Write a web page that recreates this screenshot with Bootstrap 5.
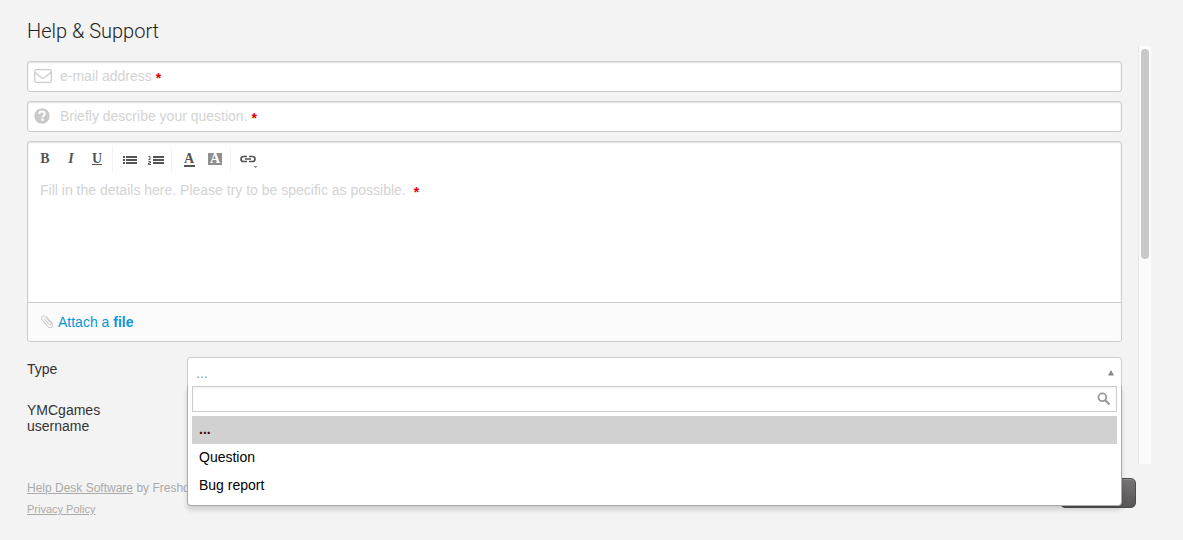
<!DOCTYPE html>
<html lang="en">
<head>
<meta charset="utf-8">
<meta name="viewport" content="width=device-width, initial-scale=1">
<title>Help &amp; Support</title>
<link href="https://cdn.jsdelivr.net/npm/bootstrap@5.3.0/dist/css/bootstrap.min.css" rel="stylesheet">
<style>
body { background: #f3f3f3; color: #333; font: 14px/16px "Liberation Sans", Arial, sans-serif; }
.page { padding: 16px 32px 0 27px; }
h1 { font: 300 20px/30px Roboto, "Liberation Sans", sans-serif; color: #222; }
.form-area { padding: 15px 16px 30px 0; min-width: 0; }
.field-box { background: #fff; border: 1px solid #ccc; border-radius: 3px; box-shadow: inset 0 1px 2px rgba(0,0,0,.12); }
.field-row { margin-bottom: 9px; }
.field-row input { height: 29px; padding: 0 8px 0 32px; }
.field-row svg { position: absolute; left: 6px; top: 6px; }
.plain-input { width: 100%; border: 0; background: transparent; outline: 0; color: #333; }
.hint { position: absolute; left: 32px; top: 6px; color: #d3d3d3; pointer-events: none; }
.req { color: #d00; font-weight: 700; line-height: 1; vertical-align: -2px; }
.tools { height: 28px; margin: 4px 0 0 4px; }
.tools button { width: 26px; height: 28px; border: 0; padding: 0; background: transparent; color: #555; font: 700 14px/16px "Liberation Serif", serif; }
.tools .group { border-right: 1px solid #f3f3f3; padding-right: 2px; margin-right: 4px; height: 26px; }
.tools .group:last-child { border: 0; }
.ink { display: inline-block; width: 11px; height: 14px; line-height: 12px; border-bottom: 2px solid #555; }
.marker { display: inline-block; width: 14px; height: 12px; line-height: 12px; background: #8f8f8f; color: #fff; }
.details { position: relative; height: 128px; }
.details textarea { height: 100%; padding: 8px 12px; resize: none; display: block; }
.details .hint { left: 12px; top: 8px; }
.details .req { margin-left: 4px; }
.attach { height: 39px; border-top: 1px solid #ccc; background: #fbfbfb; padding-left: 12px; border-radius: 0 0 3px 3px; }
.attach a { color: #0a96d7; text-decoration: none; margin-left: 4px; }
.caption { width: 160px; flex: none; padding-right: 60px; }
.picker { position: relative; z-index: 5; }
.picker-btn { width: 100%; height: 30px; border: 1px solid #ccc; border-bottom: 0; border-radius: 4px 4px 0 0; background: #fff; color: #999; padding: 0 6px 0 8px; }
.menu { position: absolute; top: 29px; left: 0; right: 0; background: #fff; border: 1px solid #aaa; border-top: 0; border-radius: 0 0 4px 4px; box-shadow: 0 4px 5px rgba(0,0,0,.15); padding: 0 4px 5px; }
.search { border: 1px solid #ccc; height: 26px; margin-bottom: 4px; padding: 0 5px; box-shadow: inset 0 2px 2px rgba(0,0,0,.04); }
.option { height: 28px; padding: 5px 7px 0; color: #000; }
.option.chosen { background: #d1d1d1; color: #400; font-weight: 700; }
.track { width: 13px; flex: none; background: #fbfbfb; border-left: 1px solid #e8e8e8; padding: 3px 2px 0; }
.thumb { height: 50.6%; border-radius: 4px; background: #c8c8c8; }
.foot { padding: 14px 15px 20px 0; font-size: 12px; color: #aaa; }
.foot a { color: #aaa; }
.foot .credit { line-height: 20px; }
.foot .policy { font-size: 11px; line-height: 22px; }
.send { height: 30px; width: 76px; border: 1px solid #4d4b4c; border-radius: 5px; color: #fff; font-weight: 700; font-size: 13px; background: linear-gradient(#767475, #585657); box-shadow: inset 0 1px 0 #8b898a; padding: 0; }
</style>
</head>
<body>
<form class="page">
  <h1 class="m-0">Help &amp; Support</h1>
  <div class="d-flex">
    <div class="form-area flex-grow-1">
      <div class="field-box field-row position-relative">
        <svg width="18" height="16" viewBox="0 0 18 16" fill="none" stroke="#ccc" stroke-width="1.3"><rect x=".7" y="1.7" width="16.6" height="12.6" rx="1.5"/><path d="M1 4.5 7.2 9.6Q9 11 10.8 9.6L17 4.5"/></svg>
        <input class="plain-input" id="email" type="email">
        <label class="hint" for="email">e-mail address <span class="req">*</span></label>
      </div>
      <div class="field-box field-row position-relative">
        <svg width="16" height="16" viewBox="0 0 16 16"><circle cx="8" cy="8" r="7.7" fill="#c9c9c9"/><path d="M5.2 6C5.3 4.2 6.4 3.5 8 3.5c1.7 0 2.8.9 2.8 2.3 0 1.900-2.300 1.900-2.300 3.700" fill="none" stroke="#fff" stroke-width="2"/><rect x="7.300" y="10.700" width="2.300" height="2.100" fill="#fff"/></svg>
        <input class="plain-input" id="subject" type="text">
        <label class="hint" for="subject">Briefly describe your question. <span class="req">*</span></label>
      </div>
      <div class="field-box">
        <div class="tools d-flex">
          <div class="group d-flex align-items-center">
            <button type="button">B</button><button type="button"><i>I</i></button><button type="button"><u>U</u></button>
          </div>
          <div class="group d-flex align-items-center">
            <button type="button" aria-label="Bulleted list"><svg width="14" height="10" fill="#555"><path d="M0 1h2v2H0zM0 4h2v2H0zM0 7h2v2H0zM3 1h11v2H3zM3 4h11v2H3zM3 7h11v2H3z"/></svg></button><button type="button" aria-label="Numbered list"><svg width="16" height="10" fill="#555"><path d="M5 1h11v2H5zM5 4h11v2H5zM5 7h11v2H5z"/><path d="M.5 1.500H2V4M.5 4.500h2M.5 6.500h2V8h-2v1.500h2.500" fill="none" stroke="#555"/></svg></button>
          </div>
          <div class="group d-flex align-items-center">
            <button type="button" title="Text colour"><span class="ink">A</span></button><button type="button" title="Highlight colour"><span class="marker">A</span></button>
          </div>
          <div class="group d-flex align-items-center">
            <button type="button" aria-label="Insert link"><svg width="18" height="18" viewBox="0 0 18 18" fill="none" stroke="#555" stroke-width="1.700"><path d="M8 6.500H4.500a2.500 2.500 0 0 0 0 5H8M10 6.500h3.500a2.500 2.500 0 0 1 0 5H10M6 9h6"/><path d="M14.500 16h4l-2 2z" fill="#888" stroke="none"/></svg></button>
          </div>
        </div>
        <div class="details">
          <textarea class="plain-input" id="details"></textarea>
          <label class="hint" for="details">Fill in the details here. Please try to be specific as possible. <span class="req">*</span></label>
        </div>
        <div class="attach d-flex align-items-center">
          <svg width="14" height="16" viewBox="0 0 14 16" fill="none" stroke="#c4c4c4" stroke-linecap="round"><path d="M4.500 5 9.300 10.700a1 1 0 0 0 1.600-1.300L5.200 2.600C3.500.8.300 2.800 1.800 5.300L7.700 12.500c2.600 3 6.600-.3 4.300-3.400L6.800 3"/></svg>
          <a href="#">Attach a <b>file</b></a>
        </div>
      </div>
      <div class="d-flex" style="margin-top:15px">
        <label class="caption pt-1" for="type">Type</label>
        <div class="picker flex-grow-1">
          <button class="picker-btn d-flex justify-content-between align-items-center" id="type" type="button"><span>...</span><svg width="8" height="6"><path d="M1 5.500 4 0l3 5.500z" fill="#888"/></svg></button>
          <div class="menu">
            <div class="search d-flex align-items-center">
              <input class="plain-input p-0" type="text" aria-label="Search types">
              <svg width="14" height="14" fill="none" stroke="#999"><circle cx="5.300" cy="5.300" r="3.900" stroke-width="1.800"/><path d="M8.300 8.300 12.500 12.500" stroke-width="2.200"/></svg>
            </div>
            <div role="listbox" aria-label="Type">
              <div class="option chosen" role="option" aria-selected="true">...</div>
              <div class="option" role="option">Question</div>
              <div class="option" role="option">Bug report</div>
            </div>
          </div>
        </div>
      </div>
      <div class="d-flex" style="margin-top:10px">
        <label class="caption" for="username" style="padding-top:5px">YMCgames username</label>
        <div class="field-box flex-grow-1 align-self-start"><input class="plain-input px-2" id="username" type="text"></div>
      </div>
    </div>
    <div class="track"><div class="thumb"></div></div>
  </div>
  <div class="foot d-flex justify-content-between align-items-start">
    <div>
      <div class="credit"><a href="#">Help Desk Software</a> by Freshdesk</div>
      <div class="policy"><a href="#">Privacy Policy</a></div>
    </div>
    <button class="send" type="submit">Submit</button>
  </div>
</form>
<script src="https://cdn.jsdelivr.net/npm/bootstrap@5.3.0/dist/js/bootstrap.bundle.min.js"></script>
</body>
</html>
